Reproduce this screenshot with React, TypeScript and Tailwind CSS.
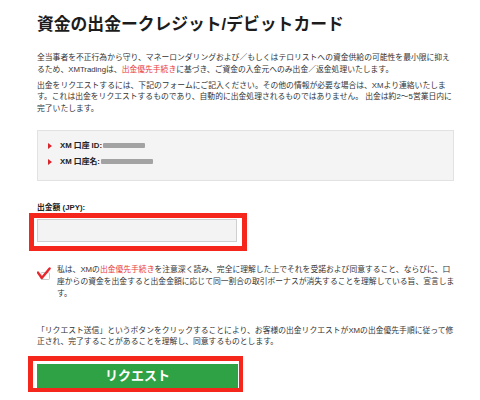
const font = "font-['Liberation_Sans','Noto_Sans_CJK_JP',sans-serif]";

function Bullet() {
    return <span className="mr-[8px] h-0 w-0 border-y-[3px] border-l-[4px] border-y-transparent border-l-[#d9262c]" />;
}

function Blurred({ width }: { width: number }) {
    return (
        <span
            className="ml-[1px] inline-block h-[5px] rounded-[1px] bg-[#a3a3a3] blur-[0.6px]"
            style={{ width }}
        />
    );
}

export default function App() {
    return (
        <div className={`${font} h-[400px] w-[480px] overflow-hidden bg-white pl-[37px] pt-[15px] text-[#333]`}>
            <h1 className="text-[16.8px] font-bold leading-[20px] text-[#1c1c1c]">
                資金の出金ークレジット/デビットカード
            </h1>

            <p className="mt-[17px] whitespace-nowrap text-[7.8px] leading-[11.5px]">
                全当事者を不正行為から守り、マネーロンダリングおよび／もしくはテロリストへの資金供給の可能性を最小限に抑え
                <br />
                るため、XMTradingは、<span className="text-[#e8383d]">出金優先手続き</span>
                に基づき、ご資金の入金元へのみ出金／返金処理いたします。
            </p>

            <p className="mt-[5px] whitespace-nowrap text-[7.8px] leading-[11.3px]">
                出金をリクエストするには、下記のフォームにご記入ください。その他の情報が必要な場合は、XMより連絡いたしま
                <br />
                す。これは出金をリクエストするものであり、自動的に出金処理されるものではありません。 出金は約2～5営業日内に
                <br />
                完了いたします。
            </p>

            {/* account info */}
            <div className="mt-[16px] flex h-[51px] w-[417px] flex-col gap-[4px] border border-[#e2e2e2] bg-[#f4f4f4] pl-[10px] pt-[9px] text-[7.8px] font-bold text-[#222]">
                <div className="flex h-[12px] items-center">
                    <Bullet />
                    XM 口座 ID:
                    <Blurred width={42} />
                </div>
                <div className="flex h-[12px] items-center">
                    <Bullet />
                    XM 口座名:
                    <Blurred width={52} />
                </div>
            </div>

            <label className="mt-[22px] block text-[7.8px] font-bold leading-[10px] text-[#222]">
                出金額 (JPY):
            </label>
            <div className="-ml-[8px] h-[38px] w-[218px] border-[5px] border-[#f5261c] pl-[3px] pt-[1px]">
                <div className="h-[23px] w-[200px] border border-[#cfcfcf] bg-[#f3f3f3]" />
            </div>

            {/* agreement */}
            <div className="mt-[13px] flex items-start">
                <svg width="14" height="16" viewBox="0 0 14 16" className="mt-[1px] shrink-0">
                    <rect x="4" y="7.5" width="8.5" height="7" rx="1" fill="#fff" stroke="#bdbdbd" strokeWidth="0.8" />
                    <path
                        d="M1 7.6 L4.8 13 L12.6 3.4"
                        fill="none"
                        stroke="#e8262c"
                        strokeWidth="2.4"
                        strokeLinecap="round"
                        strokeLinejoin="round"
                    />
                </svg>
                <p className="ml-[6px] whitespace-nowrap text-[7.8px] leading-[12px]">
                    私は、XMの<span className="text-[#e8383d]">出金優先手続き</span>
                    を注意深く読み、完全に理解した上でそれを受諾および同意すること、ならびに、口
                    <br />
                    座からの資金を出金すると出金金額に応じて同一割合の取引ボーナスが消失することを理解している旨、宣言しま
                    <br />
                    す。
                </p>
            </div>

            <p className="mt-[25px] whitespace-nowrap text-[7.8px] leading-[11.6px]">
                「リクエスト送信」というボタンをクリックすることにより、お客様の出金リクエストがXMの出金優先手順に従って修
                <br />
                正され、完了することがあることを理解し、同意するものとします。
            </p>

            <div className="-ml-[9px] mt-[8px] h-[36px] w-[215px] border-[5px] border-b-[4px] border-r-[4px] border-[#f5261c] pl-[4px] pt-[2px]">
                <button className="h-[24px] w-[201px] bg-[#2fa246] text-[13px] font-bold leading-[24px] text-white">
                    リクエスト
                </button>
            </div>
        </div>
    );
}
